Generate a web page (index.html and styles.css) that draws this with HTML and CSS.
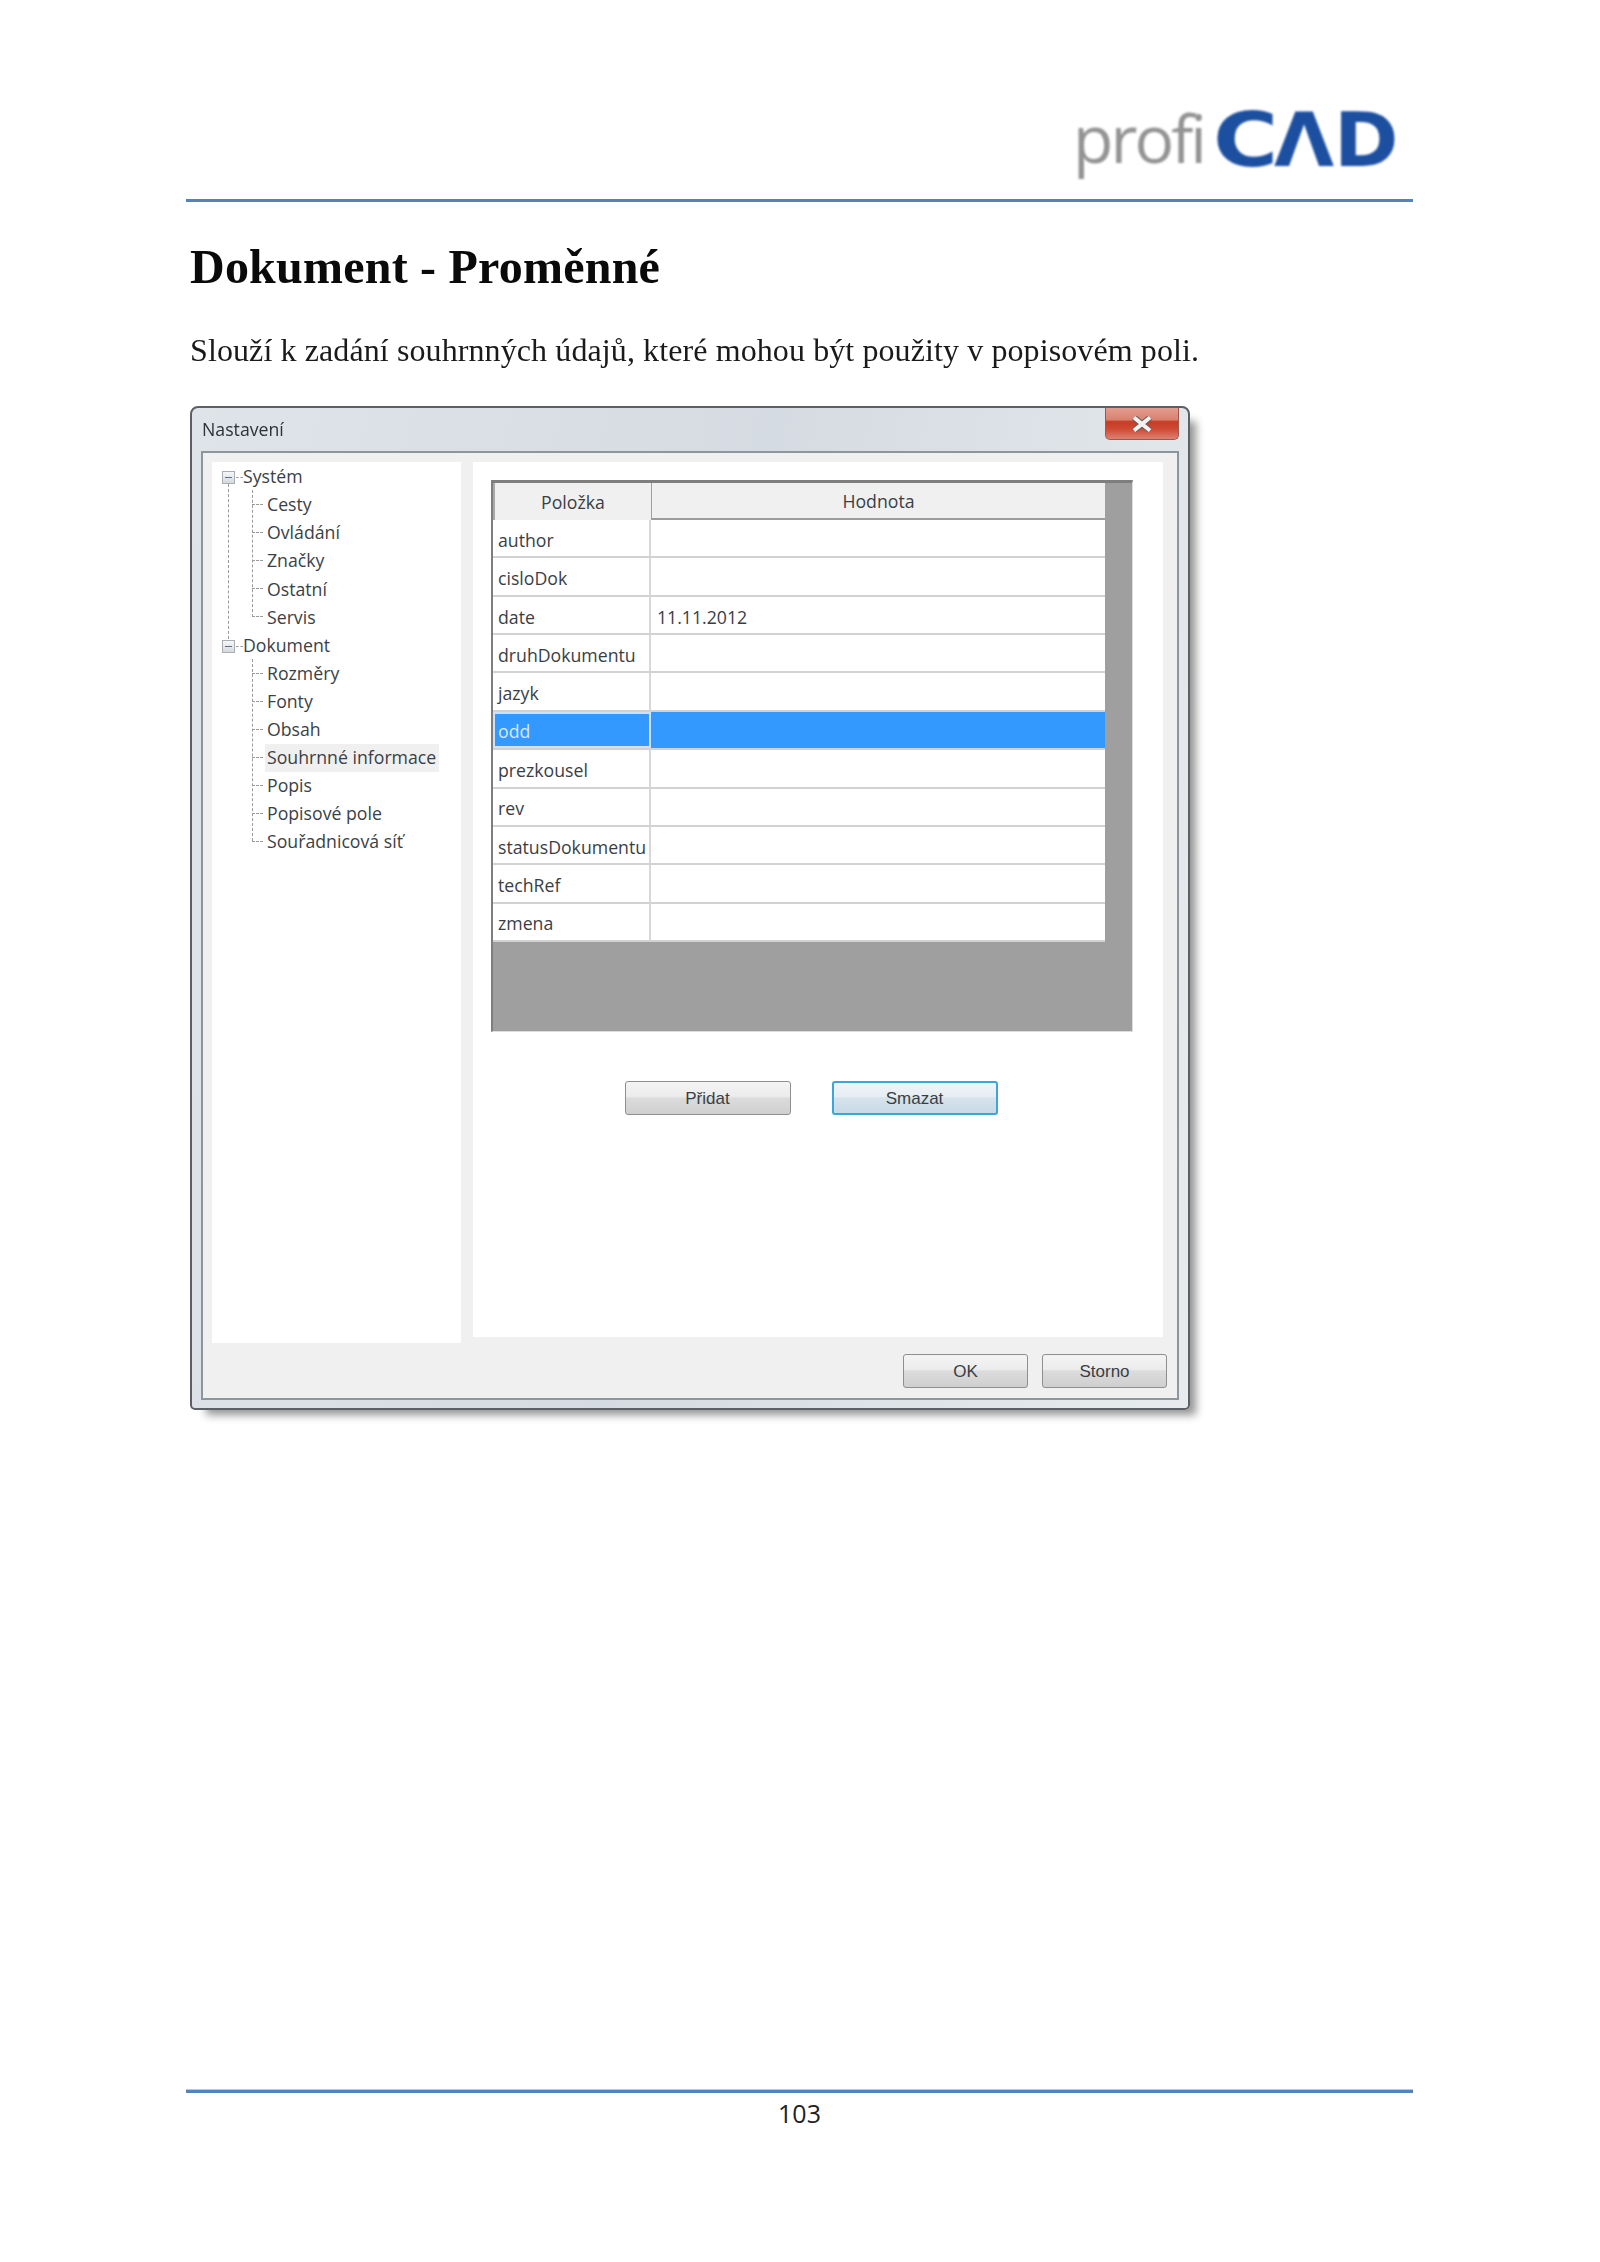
FILE: index.html
```html
<!DOCTYPE html>
<html lang="cs">
<head>
<meta charset="utf-8">
<title>Dokument - Proměnné</title>
<link rel="stylesheet" href="styles.css">
</head>
<body>
<div class="page">
  <header class="page-header">
    <div class="logo"><span class="logo-profi">profi</span><span class="logo-cad"><span class="logo-c">C</span><span class="logo-a">Λ</span><span class="logo-d">D</span></span></div>
  </header>
  <main class="content">
    <h1 class="title">Dokument - Proměnné</h1>
    <p class="lead">Slouží k zadání souhrnných údajů, které mohou být použity v popisovém poli.</p>
    <section class="dialog">
      <div class="titlebar">
        <span class="titlebar-text">Nastavení</span>
        <div class="close">
          <svg class="close-x" width="24" height="16" viewBox="0 0 24 16"><path class="x-out" d="M4 1.5L20 14.5M20 1.5L4 14.5"/><path class="x-in" d="M4 1.5L20 14.5M20 1.5L4 14.5"/></svg>
        </div>
      </div>
      <div class="panel">
        <div class="panel-main">
          <nav class="tree">
            <div class="branch">
              <div class="root"><span class="box"></span>Systém</div>
              <div class="children">
                <div class="leaf">Cesty</div>
                <div class="leaf">Ovládání</div>
                <div class="leaf">Značky</div>
                <div class="leaf">Ostatní</div>
                <div class="leaf">Servis</div>
              </div>
            </div>
            <div class="branch last">
              <div class="root"><span class="box"></span>Dokument</div>
              <div class="children">
                <div class="leaf">Rozměry</div>
                <div class="leaf">Fonty</div>
                <div class="leaf">Obsah</div>
                <div class="leaf"><span class="selected">Souhrnné informace</span></div>
                <div class="leaf">Popis</div>
                <div class="leaf">Popisové pole</div>
                <div class="leaf">Souřadnicová síť</div>
              </div>
            </div>
          </nav>
          <div class="detail">
            <div class="grid">
              <div class="table">
                <div class="head">
                  <div class="head-a">Položka</div>
                  <div class="head-b">Hodnota</div>
                </div>
                <div class="row"><div class="cell-a">author</div><div class="cell-b"></div></div>
                <div class="row"><div class="cell-a">cisloDok</div><div class="cell-b"></div></div>
                <div class="row"><div class="cell-a">date</div><div class="cell-b">11.11.2012</div></div>
                <div class="row"><div class="cell-a">druhDokumentu</div><div class="cell-b"></div></div>
                <div class="row"><div class="cell-a">jazyk</div><div class="cell-b"></div></div>
                <div class="row active"><div class="cell-a">odd</div><div class="cell-b"></div></div>
                <div class="row"><div class="cell-a">prezkousel</div><div class="cell-b"></div></div>
                <div class="row"><div class="cell-a">rev</div><div class="cell-b"></div></div>
                <div class="row"><div class="cell-a">statusDokumentu</div><div class="cell-b"></div></div>
                <div class="row"><div class="cell-a">techRef</div><div class="cell-b"></div></div>
                <div class="row"><div class="cell-a">zmena</div><div class="cell-b"></div></div>
              </div>
            </div>
            <div class="grid-actions">
              <button class="btn btn-wide" type="button">Přidat</button>
              <button class="btn btn-wide btn-focus" type="button">Smazat</button>
            </div>
          </div>
        </div>
        <div class="panel-foot">
          <button class="btn btn-narrow" type="button">OK</button>
          <button class="btn btn-narrow" type="button">Storno</button>
        </div>
      </div>
    </section>
  </main>
  <footer class="page-footer">103</footer>
</div>
</body>
</html>
```

FILE: styles.css
```css
* { box-sizing: border-box; }
html, body { margin: 0; background: #fff; }
.page {
  width: 1600px;
  height: 2262px;
  padding: 0 187px 0 186px;
  display: flex;
  flex-direction: column;
}
.page-header {
  height: 202px;
  padding: 96px 18px 0 0;
  border-bottom: 3px solid #5383bf;
  display: flex;
  justify-content: flex-end;
}
.logo {
  display: flex;
  align-items: flex-start;
  height: 90px;
  filter: blur(0.8px);
}
.logo-profi {
  font: 500 66px/82px "Open Sans", sans-serif;
  letter-spacing: -3px;
  color: #939393;
  margin-right: 9px;
}
.logo-cad {
  display: flex;
  width: 182px;
  font: 700 74px/88px "DejaVu Sans", sans-serif;
  color: #1c4fa0;
}
.logo-c, .logo-a, .logo-d { display: block; width: 61px; transform-origin: left center; }
.logo-c { transform: scaleX(1.2); }
.logo-a { transform: scaleX(1.05); }
.logo-d { transform: scaleX(1.05); }
.content { padding-left: 4px; }
.title {
  margin: 35px 0 0;
  font: 700 48px/60px "Liberation Serif", serif;
  letter-spacing: 0.23px;
  color: #0a0a0a;
  filter: blur(0.3px);
}
.lead {
  margin: 31px 0 0;
  font: 400 32px/44px "Liberation Serif", serif;
  letter-spacing: 0.1px;
  color: #1a1a1a;
  filter: blur(0.3px);
}
.dialog {
  width: 1000px;
  height: 1004px;
  margin-top: 34px;
  border: 2px solid #5c6066;
  border-radius: 8px 8px 5px 5px;
  background: linear-gradient(100deg, #dfe4e9 0%, #d5dbe2 50%, #e7ebee 100%);
  box-shadow: 11px 10px 9px -5px rgba(0, 0, 0, 0.42);
  display: flex;
  flex-direction: column;
  filter: blur(0.5px);
  font: 400 17.7px/1 "Open Sans", sans-serif;
  color: #333;
}
.titlebar {
  height: 44px;
  display: flex;
  justify-content: space-between;
  padding: 0 9px 0 10px;
}
.titlebar-text { margin-top: 13px; color: #2c3138; }
.close {
  width: 74px;
  height: 32px;
  border: 1px solid #a0584e;
  border-top: 0;
  border-radius: 0 0 5px 5px;
  background: linear-gradient(#e39e90 0%, #d9816f 38%, #c63c25 44%, #cf4a33 68%, #dc8272 100%);
  display: flex;
  align-items: center;
  justify-content: center;
}
.close-x { display: block; }
.x-out { fill: none; stroke: #6a5a58; stroke-width: 6; }
.x-in { fill: none; stroke: #f2f2f2; stroke-width: 4; }
.panel {
  flex: 1;
  margin: 0 9px 8px;
  border: 2px solid #8d959d;
  background: #f0f0f0;
  padding: 9px 10px 10px 9px;
  display: flex;
  flex-direction: column;
}
.panel-main { display: flex; gap: 12px; align-items: flex-start; }
.tree {
  width: 249px;
  height: 881px;
  background: #fff;
  padding-left: 10px;
  color: #3b3f46;
}
.branch { position: relative; }
.branch:not(.last)::before {
  content: "";
  position: absolute;
  left: 6px;
  top: 22px;
  height: 155px;
  border-left: 1px dashed #9a9a9a;
}
.root {
  height: 28.1px;
  padding-top: 2px;
  display: flex;
  align-items: center;
  gap: 8px;
  position: relative;
}
.root::after {
  content: "";
  position: absolute;
  left: 14px;
  top: 15px;
  width: 7px;
  border-top: 1px dashed #9a9a9a;
}
.box {
  width: 13px;
  height: 13px;
  margin-top: 1px;
  border: 1px solid #a8aeb4;
  background: linear-gradient(#f6f7f8, #d5d9dd);
  position: relative;
}
.box::after {
  content: "";
  position: absolute;
  left: 2px;
  right: 2px;
  top: 5px;
  border-top: 1px solid #5b6f8f;
}
.children { position: relative; padding-left: 45px; }
.children::before {
  content: "";
  position: absolute;
  left: 30px;
  top: 0;
  bottom: 14px;
  border-left: 1px dashed #9a9a9a;
}
.leaf {
  height: 28.1px;
  padding-top: 2px;
  display: flex;
  align-items: center;
  position: relative;
}
.leaf::before {
  content: "";
  position: absolute;
  left: -15px;
  top: 14px;
  width: 11px;
  border-top: 1px dashed #9a9a9a;
}
.selected {
  background: #f0f0f0;
  margin-left: -2px;
  padding: 5px 3px 5px 2px;
  white-space: nowrap;
}
.detail {
  width: 690px;
  height: 875px;
  background: #fff;
  padding: 18px 0 0 18px;
}
.grid {
  width: 642px;
  height: 552px;
  background: #9f9f9f;
  border-style: solid;
  border-width: 3px 1px 1px 2px;
  border-color: #7e7e7e #dcdcdc #dcdcdc #7e7e7e;
}
.table { width: 612px; color: #3a3e44; }
.head { display: grid; grid-template-columns: 158px 454px; height: 37px; text-align: center; }
.head-a {
  background: #f0f0f0;
  padding-top: 11px;
  border-left: 2px solid #a8a8a8;
}
.head-b {
  background: #f0f0f0;
  padding-top: 10px;
  border-bottom: 2px solid #9c9c9c;
  margin-left: 1px;
}
.row {
  display: grid;
  grid-template-columns: 158px 454px;
  height: 38.36px;
  background: #fff;
  border-bottom: 2px solid #d2d2d2;
}
.cell-a {
  padding: 5px 0 0 5px;
  display: flex;
  align-items: center;
  border-right: 2px solid #d8d8d8;
  white-space: nowrap;
  overflow: hidden;
}
.cell-b { padding: 5px 0 0 6px; display: flex; align-items: center; }
.active { background: #3399ff; border-bottom-color: #d2d2d2; }
.active .cell-a {
  color: #d7e9fb;
  border: 2px solid #cfe1f3;
  padding: 3px 0 0 3px;
}
.grid-actions { display: flex; justify-content: center; gap: 41px; margin-top: 49px; width: 640px; }
.btn {
  height: 34px;
  padding: 0;
  border: 1px solid #8f8f8f;
  border-radius: 3px;
  background: linear-gradient(#f4f4f4 0%, #ececec 45%, #dcdcdc 50%, #cfcfcf 100%);
  font: 400 17px/1 "Liberation Sans", sans-serif;
  color: #3a3e44;
}
.btn-wide { width: 166px; }
.btn-narrow { width: 125px; }
.btn-focus {
  border: 2px solid #3ba6dc;
  background: linear-gradient(#eef4f8 0%, #e6eef3 45%, #d5e3ec 50%, #c8dae6 100%);
}
.panel-foot { display: flex; justify-content: flex-end; gap: 14px; margin-top: 11px; }
.page-footer {
  margin-top: auto;
  margin-bottom: 132px;
  border-top: 3px solid #5383bf;
  box-shadow: 0 -1px 0 #b6c9e2;
  padding-top: 3px;
  text-align: center;
  font: 400 25px/34px "Open Sans", sans-serif;
  color: #222;
}
```
